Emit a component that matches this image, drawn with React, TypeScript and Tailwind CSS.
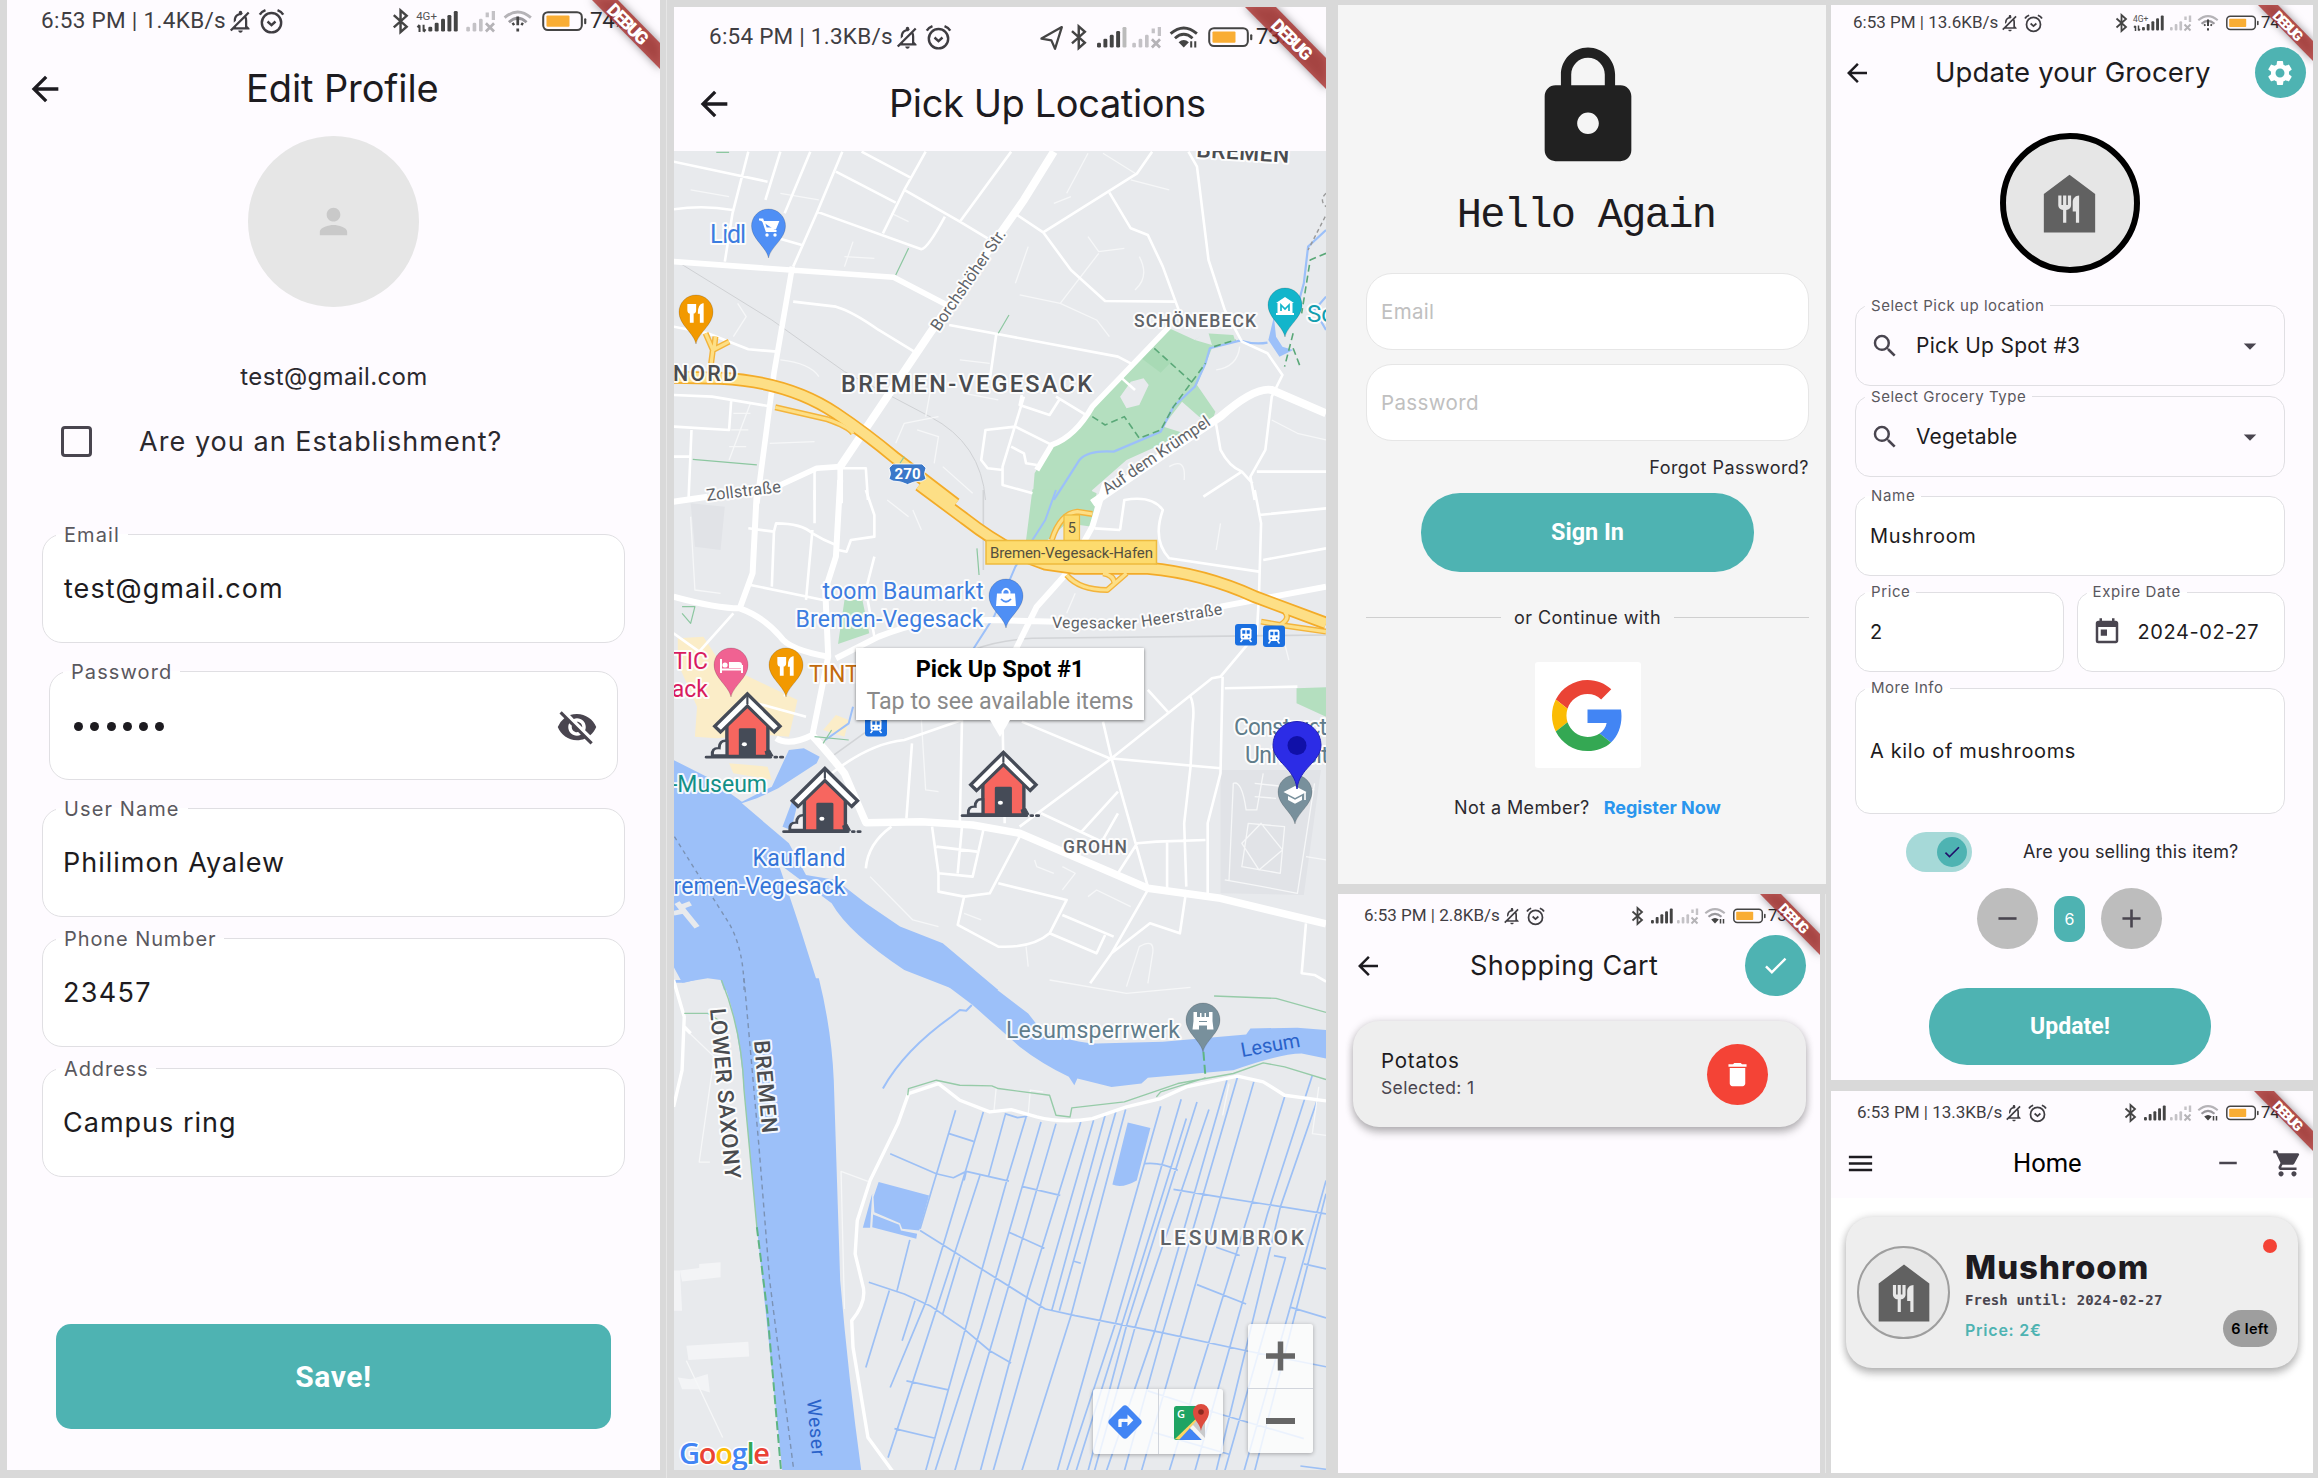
import React from "react";
import {
  MdArrowBack, MdVisibilityOff, MdPerson, MdLock, MdCheck, MdDelete, MdSettings, MdSearch,
  MdArrowDropDown, MdToday, MdRemove, MdAdd, MdMenu, MdShoppingCart, MdFoodBank,
  MdOutlineNotificationsOff, MdDirections,
} from "react-icons/md";

/* ---------- status bar ---------- */

type StatusProps = {
  big?: boolean;
  label: string;
  percent: string;
  network: "4g" | "weak" | "data";
  location?: boolean;
  warn?: boolean;
  className: string;
  textClass: string;
};

function RadioIcons({ k, network, location, warn }: { k: number; network: StatusProps["network"]; location?: boolean; warn?: boolean }) {
  const g4 = network === "4g";
  const bars = [0, 1, 2, 3, 4];
  const sx = g4 ? 46 : 48;
  const bx = g4 ? 20 : 29;
  return (
    <svg width={165 * k} height={24 * k} viewBox="0 0 165 24" fill="none" className="shrink-0">
      {location && <path d="M7 13 L22 4.5 L17 20.5 L14.3 14.3 Z" stroke="#444" strokeWidth="1.7" strokeLinejoin="round" />}
      <path d={`M${bx + 0.5} 7.5 L${bx + 10} 16 L${bx + 5.5} 20 V4 L${bx + 10} 8 L${bx + 0.5} 16.5`} stroke="#444" strokeWidth="1.8" />
      {g4 && (
        <>
          <text x="37" y="11" fontSize="8.5" fontFamily="Roboto" fill="#555">4G+</text>
          <path d="M39.5 15 V20 M38 16.5 L39.5 14.7 M42.5 14.5 V19.5 M44 18 L42.5 19.8" stroke="#444" strokeWidth="1.5" />
        </>
      )}
      {bars.map((i) => (
        <rect key={i} x={sx + i * 4.7} y={16 - i * 2.9} width="2.9" height={3.6 + i * 2.9} rx="1"
          fill={network === "weak" && i === 4 ? "#bbb" : "#444"} />
      ))}
      {[0, 1, 2].map((i) => (
        <rect key={i} x={74 + i * 4.7} y={16 - i * 2.9} width="2.7" height={3.6 + i * 2.9} rx="1" fill="#c4c2c6" />
      ))}
      <path d="M89.5 5.5 V9 M94 4.5 V11" stroke="#c4c2c6" strokeWidth="2.4" />
      <path d="M88.5 13.5 L94.5 19.5 M94.5 13.5 L88.5 19.5" stroke="#b5b3b7" strokeWidth="2" />
      <path d="M102.3 9.3 Q112 1 121.7 9.3" stroke={network === "weak" ? "#444" : "#b5b3b7"} strokeWidth="2.1" />
      <path d="M105.5 12.7 Q112 7 118.5 12.7" stroke={network === "weak" ? "#444" : "#9a989d"} strokeWidth="2.1" />
      {warn ? (
        <path d="M112 8.5 V15 M112 17.3 V19.6 M108 14.5 L109.5 13.5 M116 14.5 L114.5 13.5" stroke="#444" strokeWidth="2" />
      ) : (
        <>
          <path d="M108.2 15.6 Q112 12.6 115.8 15.6 L112 19.5 Z" fill="#444" />
          <path d="M117.5 15 V19.5 M120.5 15 V19.5" stroke="#444" strokeWidth="1.5" />
        </>
      )}
      <rect x="130.8" y="5.3" width="28.5" height="13.2" rx="3.5" stroke="#444" strokeWidth="1.5" />
      <rect x="133.2" y="7.7" width="17" height="8.4" rx="0.8" fill="#f9ad34" />
      <rect x="161" y="9.8" width="1.6" height="4.4" rx="0.8" fill="#444" />
    </svg>
  );
}

function AlarmIcon({ className }: { className: string }) {
  return (
    <svg viewBox="0 0 24 24" fill="none" stroke="currentColor" strokeWidth="2" className={className}>
      <circle cx="12" cy="13" r="8" />
      <path d="M8.7 12 L12 15 L15.3 12 M2.3 6.3 Q3.5 4 7 2.6 M21.7 6.3 Q20.5 4 17 2.6" />
    </svg>
  );
}

function StatusBar({ big, label, percent, network, location, warn, className, textClass }: StatusProps) {
  const k = big ? 1.355 : 1;
  return (
    <div className={`flex shrink-0 items-center font-[Roboto] text-[#3f3d42] ${big ? "text-[22.5px]" : "text-[17px]"} ${className}`}>
      <span className={`whitespace-nowrap ${textClass}`}>{label}</span>
      <MdOutlineNotificationsOff className={`shrink-0 -scale-x-100 ${big ? "ml-px size-[27px]" : "ml-[2px] size-[20px]"}`} />
      <AlarmIcon className={`shrink-0 ${big ? "ml-[3px] size-[29px]" : "ml-[3px] size-[21px]"}`} />
      <div className="ml-auto flex shrink-0 items-center">
        <RadioIcons k={k} network={network} location={location} warn={warn} />
        <div className={`flex items-baseline ${big ? "w-[70px]" : "w-[52px]"}`}>
          <span className="tracking-[-0.4px] text-[#2f2d31]">{percent}</span>
          <span className={big ? "text-[13px]" : "text-[10px]"}>%</span>
        </div>
      </div>
    </div>
  );
}

/* Corner banner: `near` and `far` are the distances from the corner where the band meets the edges. */
function DebugBanner({ near, far, font, length, at }: { near: number; far: number; font: number; length: number; at: number }) {
  const s = 100;
  return (
    <svg width={s} height={s} viewBox={`0 0 ${s} ${s}`} className="pointer-events-none absolute right-0 top-0 overflow-hidden">
      <g className="drop-shadow-[0_0_4px_rgba(0,0,0,0.55)]">
        <path d={`M${s - far} -1 H${s - near} L${s + 1} ${near + 1} V${far + 1} Z`} fill="#a92826" fillOpacity="0.75" />
      </g>
      <g transform={`translate(${s - at} ${(near + far) / 2 - at}) rotate(45)`}>
        <text x="0" y={font * 0.36} textAnchor="middle" textLength={length} fontFamily="Roboto" fontWeight="900" fontSize={font} fill="#fff">DEBUG</text>
      </g>
    </svg>
  );
}

/* ---------- outlined field ---------- */

function Field({ label, big, plain, className, labelClass, bodyClass, children }: {
  label: string; big?: boolean; plain?: boolean; className: string; labelClass: string; bodyClass?: string; children: React.ReactNode;
}) {
  return (
    <fieldset className={`min-w-0 shrink-0 border-[#e0dfe3] ${plain ? "" : "bg-white"} ${big ? "rounded-[20px] border-[1.5px]" : "rounded-[15px] border"} ${className}`}>
      <legend className={`whitespace-nowrap font-[Inter] text-[#5a585e] ${big ? "ml-[13px] h-[26px] px-2 text-[20px] leading-[28px]" : "ml-[9px] h-5 px-1.5 text-[15px] leading-[21px]"} ${labelClass}`}>{label}</legend>
      <div className={`flex items-center whitespace-nowrap font-[Inter] text-[#1d1b20] ${big ? "px-5 text-[27px]" : "px-[14px]"} ${bodyClass ?? (big ? "h-[85px]" : "h-[60px]")}`}>
        {children}
      </div>
    </fieldset>
  );
}

/* ---------- edit profile ---------- */

function EditProfile() {
  return (
    <section className="relative ml-[7px] flex h-[1470px] w-[653px] shrink-0 flex-col overflow-hidden bg-[#fefbff]">
      <StatusBar big label="6:53 PM | 1.4KB/s" percent="74" network="4g" warn className="h-[42px]" textClass="ml-[34px] tracking-[0.31px]" />
      <header className="flex h-[93px] shrink-0 items-center">
        <MdArrowBack className="ml-[18px] size-[40px] text-[#1d1b20]" />
        <h1 className="ml-[181px] whitespace-nowrap font-[Inter] text-[38px] tracking-[-0.1px] text-[#1d1b20]">Edit Profile</h1>
      </header>
      <div className="mt-px flex size-[171px] shrink-0 items-center justify-center self-center rounded-full bg-[#e6e6e6]">
        <MdPerson className="size-[41px] text-[#c9c9c9]" />
      </div>
      <div className="mt-[56px] flex h-7 shrink-0 items-center justify-center pl-px font-[Inter] text-[24px] tracking-[0.37px] text-[#2b292e]">test@gmail.com</div>
      <div className="mt-8 flex h-9 shrink-0 items-center">
        <span className="ml-[54px] h-[31px] w-[31px] rounded-[4px] border-[3px] border-[#49454f]" />
        <span className="ml-[47px] whitespace-nowrap pt-0.5 font-[Inter] text-[27px] tracking-[1.05px] text-[#2b292e]">Are you an Establishment?</span>
      </div>
      <div className="mt-[62px] flex flex-col px-[35px]">
        <Field big label="Email" className="h-[122px]" labelClass="tracking-[1.1px]"><span className="ml-px tracking-[1.05px]">test@gmail.com</span></Field>
        <Field big label="Password" className="mx-[7px] mt-[15px] h-[122px]" labelClass="tracking-[1.1px]">
          <div className="ml-[4px] flex gap-[7.3px]">
            {[0, 1, 2, 3, 4, 5].map((i) => <span key={i} className="size-[9px] rounded-full bg-[#1d1b20]" />)}
          </div>
          <MdVisibilityOff className="-mr-px ml-auto size-[42px] text-[#49454f]" />
        </Field>
        <Field big label="User Name" className="mt-[15px] h-[122px]" labelClass="tracking-[1.1px]"><span className="tracking-[1px]">Philimon Ayalew</span></Field>
        <Field big label="Phone Number" className="mt-2 h-[122px]" labelClass="tracking-[0.91px]"><span className="tracking-[1.3px]">23457</span></Field>
        <Field big label="Address" className="mt-2 h-[122px]" labelClass="tracking-[0.88px]"><span className="tracking-[1px]">Campus ring</span></Field>
      </div>
      <button className="mx-[49px] mt-[147px] h-[105px] shrink-0 rounded-[15px] bg-[#4eb3b2] font-[Roboto] text-[30px] font-bold tracking-[0.6px] text-white">Save!</button>
      <DebugBanner near={43} far={69} font={18} length={50} at={32} />
    </section>
  );
}

/* ---------- map ---------- */

const PIN = "M17 49 C15 38 0 30 0 17 A17 17 0 1 1 34 17 C34 30 19 38 17 49Z";

function Pin({ x, y, color, children }: { x: number; y: number; color: string; children?: React.ReactNode }) {
  return (
    <g transform={`translate(${x - 17} ${y})`}>
      <path d={PIN} fill={color} stroke="rgba(0,0,0,0.15)" strokeWidth="1" />
      {children}
    </g>
  );
}

const Cutlery = () => (
  <path d="M9 9 V15 Q9 18 11.5 18 V27 H14 V18 Q16.5 18 16.5 15 V9 M11.3 9 V15 M14 9 V15 M24 9 Q19.5 10 19.5 18 H21.5 V27 H24 Z" fill="#fff" stroke="#fff" strokeWidth="1.3" />
);

function Label({ x, y, len, size, color = "#4a4c50", weight = 400, anchor = "start", rotate = 0, halo = true, children }: {
  x: number; y: number; len?: number; size: number; color?: string; weight?: number;
  anchor?: "start" | "middle" | "end"; rotate?: number; halo?: boolean; children: string;
}) {
  return (
    <text x={x} y={y} textLength={len} fontSize={size} fontWeight={weight} fill={color} fontFamily="Roboto" textAnchor={anchor}
      transform={rotate ? `rotate(${rotate} ${x} ${y})` : undefined}
      stroke={halo ? "rgba(255,255,255,0.9)" : "none"} strokeWidth={halo ? 4 : 0} strokeLinejoin="round" paintOrder="stroke">
      {children}
    </text>
  );
}

function House({ x, y }: { x: number; y: number }) {
  const d = "#454b57";
  return (
    <g transform={`translate(${x} ${y}) scale(.4273 .3333)`}>
      <path d="M98 30 L146 100 V194 H50 V100 Z" fill="#f7665f" stroke={d} strokeWidth="8" />
      <path d="M98 0 L16 104 L35 128 L98 50 L161 128 L180 104 Z" fill={d} />
      <path d="M98 14 L27 104 L36 115 L98 37 L160 115 L169 104 Z" fill="#fff" />
      <path d="M98 12 V38" stroke={d} strokeWidth="5" />
      <rect x="78" y="110" width="40" height="86" rx="4" fill={d} />
      <circle cx="91" cy="158" r="6" fill="#fff" />
      <path d="M16 192 Q14 168 32 170 Q32 145 50 148 V192 Z" fill="#f1f1f3" stroke={d} strokeWidth="7" />
      <path d="M143 196 L140 180 L150 176 L158 194" fill={d} stroke={d} strokeWidth="3" />
      <path d="M2 197 H152 M163 197 H166 M176 197 H180" stroke={d} strokeWidth="8" strokeLinecap="round" />
    </g>
  );
}

function Train({ x, y }: { x: number; y: number }) {
  return (
    <g transform={`translate(${x} ${y})`}>
      <rect width="22" height="21.5" rx="3" fill="#1a6fe0" />
      <rect x="5.5" y="4" width="11" height="11.5" rx="2.2" fill="#fff" />
      <path d="M7.3 6.3 H10.3 V9.8 H7.3 Z M11.7 6.3 H14.7 V9.8 H11.7 Z" fill="#1a6fe0" />
      <circle cx="8.3" cy="12.8" r="1" fill="#1a6fe0" /><circle cx="13.7" cy="12.8" r="1" fill="#1a6fe0" />
      <path d="M7.5 15.5 L5.5 18 M14.5 15.5 L16.5 18" stroke="#fff" strokeWidth="1.5" />
    </g>
  );
}

const NORTH = "translate(665 0) scale(.4273 .3333)";
const MIDDLE = "translate(665 490) scale(.4273 .3333)";
const SOUTH = "translate(665 980) scale(.4273 .334)";

type Stroke = { t: string; d: string; w: number; c: string; dash?: string };

function Line({ t, d, w, c, dash }: Stroke) {
  return <path transform={t} d={d} fill="none" stroke={c} strokeWidth={w} strokeDasharray={dash} strokeLinejoin="round" vectorEffect="non-scaling-stroke" />;
}

const LANES_N = "M200 1210 L150 1380 M160 1240 H200 M155 1290 H195 M150 1340 H190 M245 1330 L350 1325 M440 725 L420 800 M420 770 L490 775 M940 580 L990 460 M910 610 L950 590 M1025 460 L1100 520 M925 910 L830 885 M925 910 L1010 960 L1040 1010 M1015 760 L925 910 M990 710 L1015 755 L1075 745 M1110 770 Q1135 830 1100 870 M620 1180 L610 1250 M540 1330 L560 1270 L640 1250 M590 1290 L640 1310 L630 1390 M650 1400 L720 1480 M700 1180 L780 1200 M690 1080 L760 1090 M1290 1110 Q1340 1100 1345 1040 M1180 1400 Q1220 1370 1215 1440 M1420 1260 L1480 1300 L1547 1320 M270 1080 Q340 1090 360 1130 M170 910 L190 950 L160 1010 M60 570 L150 590 M270 580 L360 600 M530 640 L570 665 M850 740 L820 850 M1090 540 L1180 570";
const ROADS_N = "M20 485 L240 545 M195 455 L158 640 L140 785 M270 455 L235 600 M340 455 L280 640 M415 455 L355 640 L300 800 M400 515 L540 608 M460 455 L578 535 M610 455 L560 570 L510 700 M355 635 L600 748 Q615 745 655 650 M560 570 L690 665 L755 715 M810 455 L690 665 M20 628 Q90 615 158 630 M265 715 L320 735 M1140 455 L1105 520 L885 697 M1040 578 L1090 685 L1130 705 L1165 800 L1195 905 L1030 903 L950 810 L885 697 L818 640 M1225 455 L1245 500 L1272 780 L1310 930 L1350 1025 L1410 1060 L1445 1125 L1420 1190 L1405 1350 L1370 1430 L1380 1500 M1195 905 L1205 940 M300 905 L400 920 Q440 935 500 990 L590 1060 M665 975 L1060 1070 L1090 1090 M775 1005 L760 1140 M20 980 L100 1000 L195 1048 L262 1055 M20 1185 L110 1190 L250 1220 M155 1200 L150 1290 L20 1280 M62 1290 L55 1500 M20 1370 H62 M915 1190 L985 1245 M835 1185 L830 1215 L900 1245 L925 1195 M840 1190 L790 1400 L790 1455 L860 1480 M820 1280 L750 1290 L740 1380 L755 1405 L790 1410 M820 1280 L905 1335 M810 1340 L840 1360 L845 1390 L870 1395 M1065 1130 L1100 1170 M1288 1260 L1300 1350 Q1320 1400 1350 1415 L1260 1490 M1350 1415 L1375 1450 M1385 1415 L1547 1415 M410 1405 L470 1405 L475 1500 M350 1410 L350 1500";
const ROADS_M = "M350 0 L350 100 M195 115 L255 125 L260 100 Q320 100 345 130 Q370 150 400 165 M255 125 L250 290 M345 120 L330 330 M200 285 L370 330 M470 0 L490 75 L490 140 L435 150 L425 185 L405 180 M490 200 L470 300 L490 440 M160 370 L80 485 M20 430 L80 485 M310 490 L280 620 M215 640 L330 680 M1065 120 L1005 115 M1065 120 L1075 30 Q1140 15 1165 60 Q1140 150 1180 205 L1390 245 M1390 75 L1547 55 M1380 0 L1395 100 L1390 320 L1385 430 L1300 560 L1280 565 L1040 810 L830 1010 M1400 210 L1547 175 M1310 595 L1480 590 M1130 600 L1180 670 M1230 620 Q1240 650 1235 700 L1230 830 L1215 1000 L1220 1190 M1025 695 L1045 805 L1130 1190 M835 695 L1040 805 L1300 835 M1305 560 L1300 850 L1270 1000 L1270 1210 M695 690 L690 1000 M578 760 L565 985 M390 850 Q480 760 560 750 L695 690 M790 700 L795 1000 M880 970 L1030 1060 M975 1025 L1060 905 M1060 1150 L1105 1060 L1150 1055 L1265 1050 M1175 1055 L1175 1195 M1020 1060 L1060 970 M470 1135 Q475 1060 530 1010 M625 1010 L640 1150 L720 1160 L745 1020 M635 1070 L730 1085 M695 1010 L685 1150 M640 1150 L640 1205 L700 1220 L760 1210 L830 1040 M700 1220 L685 1305 L780 1370 Q860 1375 900 1330 L940 1230 L780 1180 M930 1275 L1050 1340 M900 1330 L1010 1390 L1030 1335 M1130 1200 L1045 1390 L995 1480 M1045 1390 L1135 1300 L1205 1330 L1220 1200 M1500 1300 L1490 1450 L1520 1455 L1547 1475";
const LANES_M = "M60 80 L70 300 L130 310 M580 60 L600 120 M520 30 L570 80 M960 310 L940 370 M1300 100 L1290 180 M1450 460 L1460 510 M600 690 L610 900 L640 905 M865 1110 L870 1130 L910 1150 M990 1220 L1010 1200 L1090 1250 M1320 1170 L1330 880 Q1350 870 1360 960 L1385 960 L1400 850 M1310 1170 Q1400 1190 1480 1210 L1520 880 M1350 1130 L1365 1000 L1450 1010 L1440 1150 Z M1395 1000 L1350 1060 L1390 1140 L1445 1080 Z M1380 880 L1520 900 M1380 920 L1430 925 M1500 1100 L1547 1110 M1080 1490 L1110 1370 Q1150 1340 1140 1400 L1130 1480 M740 1290 L700 1270 M845 1370 L850 1430 M480 1160 L580 1290 L640 1310 M930 1130 L960 1150 L930 1200";
const DITCHES = "M680 390 L597 745 M573 778 L543 930 M745 395 L652 790 L610 965 L527 1220 M705 573 L700 600 M737 585 L522 1430 M797 400 L757 588 M845 410 L800 600 L610 1470 M880 425 L805 755 L740 1040 L632 1470 M915 430 L678 1470 M973 425 L850 935 L738 1470 M1003 420 L878 975 L768 1470 M1030 405 L905 990 M1055 395 L923 990 M1078 388 L950 1005 L835 1470 M1160 378 L1020 1010 L918 1470 M1208 357 L1055 1025 L940 1470 M1220 415 L962 1470 M1245 365 L1080 1035 L990 1470 M1273 388 L1100 1040 L1005 1470 M1315 300 L1145 1055 L1033 1470 M1340 290 L1165 1055 L1075 1470 M1378 305 L1115 1470 M1450 350 L1180 1470 M1515 285 L1410 700 L1240 1470 M1525 365 L1440 680 L1290 1470 M1547 600 L1355 1470 M1425 825 L1452 832 L1310 1470 M1547 640 L1380 1470 M525 930 L470 1160 M585 960 L555 1080 M690 830 L650 1000 M527 520 L635 580 L675 592 L705 573 L805 602 M665 460 L722 483 M835 618 L925 645 M805 755 L888 803 M597 750 L890 985 L960 1005 L1160 1055 L1360 1110 L1547 1158 M477 905 L560 940 L620 975 L700 1045 L760 1110 L810 1147 M565 1200 L663 1227 M537 1343 L632 1372 M1123 550 Q1160 545 1200 570 M1190 627 L1300 650 L1547 700 M1245 912 L1360 970 M1290 800 L1345 825 M1495 850 L1547 865 M1465 980 L1547 1012 M1130 1230 L1300 1300 L1495 1373 M1145 1355 L1320 1420 M1487 1455 L1547 1465 M957 842 L973 848 M795 400 L825 412 L848 408";
const HIGHWAY_N = "M20 1132 L130 1135 Q290 1145 400 1240 Q470 1300 540 1375 L680 1512";
const HIGHWAY_M = "M595 -15 L700 85 Q800 185 890 222 L960 235 L1130 235 Q1260 250 1380 320 L1547 400";
const RAMPS_N = "M258 1222 L380 1258 Q430 1280 440 1300 M106 1110 L112 1050 L95 1000 M112 1050 L150 1025 M118 1010 L115 1045";
const RAMPS_M = "M905 150 Q925 70 965 65 L1000 72 M940 255 Q970 300 1035 300 L1080 250 M1025 250 Q1050 255 1052 280 M1395 395 L1440 405 Q1465 385 1450 365 M1440 405 L1547 425";

function MapDrawing() {
  const water = "#9cc0f9";
  const park = "#b4dfbf";
  return (
    <svg width="652" height="1319" viewBox="674 151 652 1319" className="block">
      <rect x="674" y="151" width="652" height="1319" fill="#e8eaed" />
      <path transform={MIDDLE} d="M1300 840 L1535 840 L1495 1215 L1300 1210Z M60 40 L140 50 L130 180 L70 170Z" fill="#e1e3e7" />
      <path transform={MIDDLE} d="M30 445 L90 440 L130 520 L310 630 L290 740 L240 735 L120 745 L70 740 L75 650 L30 520Z M150 820 L240 830 L250 870 L160 850Z M370 720 L400 675 L430 690 L420 740Z" fill="#fbedc8" />

      <path transform={NORTH} d="M1180 985 L1240 1020 L1265 1000 L1330 1005 L1335 1025 L1280 1045 L1245 1155 L1288 1235 L1280 1265 L1250 1250 L1210 1205 L1165 1280 L1215 1300 L1150 1340 L1080 1380 L1000 1470 L985 1500 L860 1500 L865 1420 L905 1335 Q960 1310 990 1250 L1000 1220 L1100 1090 Z" fill={park} />
      <path transform={NORTH} d="M1065 1190 L1090 1145 L1120 1135 L1132 1155 L1110 1215 L1080 1225Z M1270 990 L1280 1035 L1240 1020Z" fill="#e8eaed" />
      <path transform={NORTH} d="M1115 1075 L1160 1118 L1185 1085 L1140 1045Z" fill="#a8dab5" />
      <path transform={MIDDLE} d="M860 -2 L990 -2 L1010 10 L1000 110 L940 100 L895 150 L845 150Z M420 330 L462 330 L478 430 L405 462Z M1478 595 L1547 592 L1547 680 L1478 640Z" fill={park} />

      <path transform={MIDDLE} d="M20 810 L100 862 L180 935 L250 890 L290 780 L325 775 L362 800 L355 820 L265 895 L215 925 L180 940 L290 1060 L330 1155 L400 1170 L470 1240 L550 1310 L650 1360 L780 1500 L680 1500 L560 1440 Q430 1330 390 1240 L265 1120 Q300 1250 320 1330 L362 1500 L138 1500 L130 1470 L100 1465 L40 1478 L20 1430Z M275 1010 L300 925 L312 932 L295 1020Z" fill={water} />
      <path transform={MIDDLE} d="M28 1238 L75 1312 M20 1270 L50 1262 M60 1240 L40 1250" stroke="#e8eaed" strokeWidth="14" />
      <path transform={SOUTH} d="M20 0 H70 L45 8 H20Z M132 -5 L360 -5 Q390 150 395 300 L410 900 Q430 1200 460 1475 L275 1475 L215 740 L185 330 Q170 100 132 -5Z" fill={water} />
      <path transform={SOUTH} d="M640 -2 L745 -2 L850 100 L880 150 Q960 190 1010 190 L1165 185 L1360 163 L1370 145 L1480 143 L1547 150 L1547 235 L1490 220 Q1440 220 1330 270 L1130 293 L1115 310 L1045 320 L965 295 L958 315 L945 290 Q880 250 830 200 L720 75Z" fill={water} />
      <path transform={SOUTH} d="M500 605 L618 645 L595 750 L555 745 L550 728 L490 695 L488 650Z M487 702 L548 733 L552 750 L590 760 L588 775 L485 740Z M485 640 L480 742 L463 742Z M1083 427 L1136 443 L1104 600 Q1070 625 1047 612Z" fill={water} />
      <Line t={SOUTH} d={DITCHES} w={1.7} c="#9dc0f5" />
      <Line t={SOUTH} d="M718 75 L705 92 L690 90 L670 110 Q560 210 510 325" w={2} c={water} />
      <Line t={NORTH} d="M1547 690 L1505 740 L1495 850 L1480 920 M1547 890 L1520 930 L1547 990 M1410 1028 Q1380 1035 1345 1022 L1275 1045 L1265 1090 L1240 1160 L1190 1220 L1160 1295 L1050 1355 Q990 1350 970 1380 L935 1450 L910 1500" w={2.2} c={water} />
      <path transform={NORTH} d="M1425 950 L1412 1020 L1438 1070 L1470 1050 L1445 1040 L1430 1010Z" fill={water} />
      <Line t={MIDDLE} d="M915 0 L890 90 L820 230 L770 380 L720 480 M440 650 L430 700 L375 750" w={2} c={water} />

      <path transform={SOUTH} d="M35 870 L80 862 L80 850 L130 845 L130 890 L40 903Z M50 1095 L195 1083 L197 1127 L55 1138Z M30 1190 L60 1195 L100 1180 L105 1235 L80 1225 L40 1225Z M20 870 L35 870 L40 990 L20 990Z" fill="#f3f4f6" />
      <Line t={NORTH} d="M20 778 L250 960 L420 1115 L620 1250 Q740 1330 750 1500" w={1} c="#cfd1d4" />
      <Line t={MIDDLE} d="M745 0 V240 M720 480 Q780 450 860 445 L1547 435 M390 800 L520 680" w={1.6} c="#d2d4d7" />
      <Line t={NORTH} d={LANES_N} w={1.3} c="#f6f7f8" />
      <Line t={MIDDLE} d={LANES_M} w={1.3} c="#f6f7f8" />
      <Line t={SOUTH} d="M475 603 L412 573 L420 985 M770 390 L775 325 M850 400 L855 330 L885 335 M1305 405 L1320 310 M1530 320 L1515 460 L1547 465 M900 0 L1080 40 L1230 22 M50 150 L115 230 L80 545 L105 545 M50 1140 L135 1370" w={1.3} c="#f6f7f8" />
      <Line t={NORTH} d={ROADS_N} w={2.6} c="#fff" />
      <Line t={MIDDLE} d={ROADS_M} w={2.6} c="#fff" />
      <Line t={SOUTH} d="M535 1475 L475 1370 L440 1100 L437 1020 Q475 960 462 910 L445 820 L450 720 L480 600 L545 430 L570 340 L640 310 L690 360 L760 395 L810 388 L870 410 Q930 430 1000 415 L1080 380 L1160 355 L1220 320 L1340 288 L1400 305 L1450 345 L1547 362 M20 0 L45 110 L40 270 L20 380 M45 140 L60 160" w={3.4} c="#fff" />
      <Line t={NORTH} d="M20 785 L535 832 L660 915 M298 800 L255 1120 L215 1510 M1180 980 L1000 1220 Q960 1310 905 1335 L870 1410 M270 1455 L355 1405 L410 1400 L410 1510" w={5.6} c="#fff" />
      <Line t={NORTH} d="M910 455 L840 600 L620 1000 L410 1400 M1000 1510 L1160 1370 L1300 1250 Q1380 1160 1420 1170 L1547 1240" w={8} c="#fff" />
      <Line t={MIDDLE} d="M20 35 L100 20 M215 0 L205 250 L175 355 M20 320 Q120 355 175 355 Q230 380 270 440 Q290 480 382 500 M410 -30 L400 200 L375 300 L382 500 L345 735 M400 505 L500 440 Q560 410 620 395 L760 390 L920 395 M1030 -20 L1000 110 L940 250 L870 350 L820 480 M1300 350 L1547 290 M345 735 Q290 770 260 745" w={6} c="#fff" />
      <Line t={MIDDLE} d="M340 730 Q370 770 420 850 L470 998 L600 995 L720 1005 L830 1030 L1130 1195 L1300 1225 L1547 1302" w={7.5} c="#fff" />

      <Line t={NORTH} d={RAMPS_N} w={6} c="#f3b43c" />
      <Line t={MIDDLE} d={RAMPS_M} w={6} c="#f3b43c" />
      <Line t={NORTH} d={HIGHWAY_N} w={13} c="#f3ab28" />
      <Line t={MIDDLE} d={HIGHWAY_M} w={13} c="#f3ab28" />
      <Line t={NORTH} d={RAMPS_N} w={3.2} c="#fddf86" />
      <Line t={MIDDLE} d={RAMPS_M} w={3.2} c="#fddf86" />
      <Line t={NORTH} d={HIGHWAY_N} w={9.5} c="#fddf86" />
      <Line t={MIDDLE} d={HIGHWAY_M} w={9.5} c="#fddf86" />

      <Line t={NORTH} d="M1145 1045 L1240 1155 M1000 1250 L1030 1275 L1075 1250 L1110 1315 L1160 1290 L1190 1220 L1265 1090 M1547 760 L1510 780 L1490 940 M1470 1000 L1450 1100 M1470 1045 L1488 1105 M1285 1040 L1335 1020" w={1.6} c="#5aa878" dash="7 4" />
      <Line t={NORTH} d="M570 745 L540 825 M805 945 L780 1000 M65 1378 L215 1395 M120 457 L150 457 M560 1370 L550 1390" w={1.2} c="#8cc7a0" />
      <Line t={NORTH} d="M1547 580 Q1530 600 1547 620 M1545 650 L1505 750" w={1.4} c="#999" dash="4 3" />
      <Line t={MIDDLE} d="M730 175 L735 255 M40 350 L70 350 L60 400 L40 370 M350 740 L430 750 M390 720 L370 760" w={1.2} c="#8cc7a0" />
      <Line t={MIDDLE} d="M22 1040 Q100 1200 150 1300 Q185 1380 185 1500" w={1.4} c="#7b92b5" dash="4 4" />
      <Line t={SOUTH} d="M185 -5 L220 500 L245 900 L302 1475" w={1.4} c="#7b92b5" dash="5 4" />
      <Line t={SOUTH} d="M132 0 Q180 150 185 330 L215 740 M45 100 H100 L150 140 M568 345 L570 325 L635 300 L690 315 L765 317 L780 325 L900 345 L915 405 L948 410 L952 383 L1075 365 L1200 310 L1330 280 L1400 248 L1450 260 L1547 298 M1150 350 L1160 335 L1265 293 M1285 48 L1430 55 L1547 97" w={1.4} c="#96cba8" />
      <Line t={SOUTH} d="M215 740 L240 1000 L272 1475 M1260 215 L1265 293" w={2} c="#5fb583" dash="9 4" />

      <Label x={1196} y={157} len={93} size={23} weight={500} rotate={3.6}>BREMEN</Label>
      <Label x={710} y={243} len={36} size={25} color="#3c7de0">Lidl</Label>
      <Label x={1134} y={327} len={122} size={17.5} weight={500} color="#5f6368">SCHÖNEBECK</Label>
      <Label x={673} y={381} len={64} size={21.5} weight={500}>NORD</Label>
      <Label x={841} y={392} len={251} size={23.5} weight={500}>BREMEN-VEGESACK</Label>
      <Label x={939} y={332} len={119} size={16.5} rotate={-55.5} color="#5f6368">Borchshöher Str.</Label>
      <Label x={1107} y={495} len={126} size={16.5} rotate={-34} color="#5f6368">Auf dem Krümpel</Label>
      <Label x={707} y={501} len={75} size={16.5} rotate={-7} color="#5f6368">Zollstraße</Label>
      <Label x={1307} y={322} size={24} color="#129eaf">Sc</Label>

      <path d="M893 464 H922 L926 468 Q923 474 926 479 L922 481 Q914 481 907.5 484.5 Q901 481 893 481 L889 479 Q892 474 889 468 Z" fill="#3b78c9" stroke="#fff" strokeWidth="0.8" />
      <Label x={907.5} y={479} len={26} size={15} weight={700} color="#fff" anchor="middle" halo={false}>270</Label>
      <rect x="1064" y="515" width="15.5" height="26" fill="#fddb6e" stroke="#eebb3e" strokeWidth="1.2" />
      <Label x={1071.8} y={533} size={14.5} color="#54503f" anchor="middle" halo={false}>5</Label>
      <rect x="986" y="540.5" width="170.5" height="23.5" fill="#fddb6e" stroke="#eebb3e" strokeWidth="1.5" />
      <Label x={990} y={557.5} len={163} size={15} color="#54503f" halo={false}>Bremen-Vegesack-Hafen</Label>

      <Label x={983.5} y={599} len={161} size={23} color="#3c7de0" anchor="end">toom Baumarkt</Label>
      <Label x={983.5} y={627} len={188} size={23} color="#3c7de0" anchor="end">Bremen-Vegesack</Label>
      <Label x={1052} y={628} len={85} size={16} rotate={0.5} color="#5f6368">Vegesacker</Label>
      <Label x={1142} y={627} len={82} size={16} rotate={-9} color="#5f6368">Heerstraße</Label>
      <Label x={708} y={669} size={23} color="#d81b60" anchor="end">TIC</Label>
      <Label x={708} y={696.5} size={23} color="#d81b60" anchor="end">ack</Label>
      <Label x={809} y={682} size={23} color="#c26a0d">TINT</Label>
      <Label x={767} y={792} size={23} color="#129087" anchor="end">-Museum</Label>
      <Label x={845.5} y={865.5} len={93} size={23} color="#3374d8" anchor="end">Kaufland</Label>
      <Label x={845.5} y={893.5} len={172} size={23} color="#3374d8" anchor="end">remen-Vegesack</Label>
      <Label x={1063} y={852.5} len={64} size={17.5} weight={500} color="#5f6368">GROHN</Label>
      <Label x={1234} y={735} len={112} size={23} color="#607d8b">Constructor</Label>
      <Label x={1245} y={763} len={94} size={23} color="#607d8b">University</Label>
      <Label x={1006} y={1037.5} len={174} size={23} color="#607d8b">Lesumsperrwerk</Label>
      <Label x={1242} y={1057} len={60} size={20} rotate={-10} color="#2a62c9" halo={false}>Lesum</Label>
      <Label x={1160} y={1244.5} len={144} size={21} weight={500} color="#5f6368">LESUMBROK</Label>
      <Label x={710} y={1009} len={171} size={22} weight={500} rotate={84.8}>LOWER SAXONY</Label>
      <Label x={754} y={1041} len={93} size={22} weight={500} rotate={84.8}>BREMEN</Label>
      <Label x={807} y={1400} len={57} size={19.5} rotate={84.8} color="#2a62c9" halo={false}>Weser</Label>

      <Pin x={768.5} y={209} color="#4f8ff5"><path d="M7.5 10.5 H11 L15 22 H25 M12.5 13 H26.5 L23.8 19.5 H14.5 Z" fill="#fff" stroke="#fff" strokeWidth="1.8" /><circle cx="15.5" cy="26" r="1.7" fill="#fff" /><circle cx="23.5" cy="26" r="1.7" fill="#fff" /></Pin>
      <Pin x={696} y={295} color="#f29900"><Cutlery /></Pin>
      <Pin x={1285} y={288} color="#12b5cb">
        <path d="M8 15 L17 9 L26 15 Z M8 25 H26 V27 H8 Z M9.5 15 H24.5 V25 H9.5 Z" fill="#fff" />
        <path d="M13 23 V17 L17 21 L21 17 V23" fill="none" stroke="#12b5cb" strokeWidth="1.7" />
      </Pin>
      <Pin x={1006} y={579} color="#4f8ff5">
        <path d="M8 14.5 H26 L27 27 H7 Z" fill="#fff" /><path d="M13.5 15 V12.5 Q17 7 20.5 12.5 V15" fill="none" stroke="#fff" strokeWidth="1.8" />
        <path d="M12 20 Q17 25.5 22 20" fill="none" stroke="#4f8ff5" strokeWidth="1.8" />
      </Pin>
      <Pin x={731} y={648} color="#f06292">
        <path d="M7 11 V25 M7 21.5 H28 M28 25 V17" fill="none" stroke="#fff" strokeWidth="2" /><path d="M15 14 H25 Q28 14 28 17 V20 H15 Z" fill="#fff" /><circle cx="11" cy="17" r="2.6" fill="#fff" />
      </Pin>
      <Pin x={786} y={648} color="#f29900"><Cutlery /></Pin>
      <Pin x={1295} y={775} color="#78909c">
        <path d="M5.5 17 L17 11 L28.5 17 L17 23 Z M10 21 L17 24.8 L24 21 V25 L17 28.8 L10 25 Z" fill="#fff" /><path d="M27 17 V25" stroke="#fff" strokeWidth="1.6" />
      </Pin>
      <Pin x={1203} y={1003} color="#78909c">
        <path d="M7.5 9 H11 V14 H14 V10 H15.5 V14 H18.5 V10 H20 V14 H23 V9 H26.5 V18 L27.5 26.5 H21 V22.5 H13 V26.5 H6.5 L7.5 18 Z" fill="#fff" />
        <path d="M13 18.5 H21" stroke="#78909c" strokeWidth="1" />
      </Pin>
      <Train x={1235} y={624} />
      <Train x={1263} y={625.5} />
      <Train x={865} y={715} />
      <House x={705.5} y={691.5} />
      <House x={783} y={766} />
      <House x={961.5} y={750} />
      <path d="M1297 789 C1295 768 1273 762 1273 745 A24 23.5 0 1 1 1321 745 C1321 762 1299 768 1297 789Z" fill="#2c2ce6" stroke="#2020b8" strokeWidth="1" />
      <circle cx="1297" cy="745.5" r="9.5" fill="#1010a8" />

      <text x="679" y="1463.5" textLength="91" fontFamily="Open Sans" fontSize="29" fontWeight="600" stroke="#fff" strokeWidth="3" strokeLinejoin="round" paintOrder="stroke">
        <tspan fill="#4285f4">G</tspan><tspan fill="#ea4335">o</tspan><tspan fill="#fbbc04">o</tspan><tspan fill="#4285f4">g</tspan><tspan fill="#34a853">l</tspan><tspan fill="#ea4335">e</tspan>
      </text>
    </svg>
  );
}

function PickUpLocations() {
  return (
    <section className="relative ml-[7px] mt-[7px] flex h-[1463px] w-[652px] shrink-0 flex-col overflow-hidden bg-[#fefbff]">
      <StatusBar big label="6:54 PM | 1.3KB/s" percent="73" network="weak" location className="h-[60px]" textClass="ml-[35px] tracking-[0.24px]" />
      <header className="mb-[11px] flex h-[73px] shrink-0 items-center">
        <MdArrowBack className="ml-[20px] size-[40px] text-[#1d1b20]" />
        <h1 className="ml-[155px] whitespace-nowrap font-[Inter] text-[38px] tracking-[-0.4px] text-[#1d1b20]">Pick Up Locations</h1>
      </header>
      <div className="relative h-[1319px] shrink-0 overflow-hidden">
        <MapDrawing />
        <div className="absolute left-[182px] top-[497px] flex h-[72px] w-[288px] flex-col items-center justify-center gap-[6px] whitespace-nowrap bg-white pt-px font-[Roboto] leading-[26px] shadow-[0_1px_3px_rgba(0,0,0,0.5)]">
          <span className="text-[23.5px] font-bold text-black">Pick Up Spot #1</span>
          <span className="text-[23.2px] text-[#8a8a8a]">Tap to see available items</span>
          <svg width="20" height="17" viewBox="0 0 20 17" className="absolute left-[134px] top-full"><path d="M0 0 H20 L10 17Z" fill="#fff" /></svg>
        </div>
        <div className="absolute left-[574px] top-[1173px] flex h-[129px] w-[65px] flex-col divide-y divide-gray-300 rounded-[3px] bg-white/80 text-[#666] shadow-[0_1px_4px_rgba(0,0,0,0.3)]">
          <svg viewBox="0 0 65 64" className="flex-1"><path d="M18 32 H47 M32.5 17.5 V46.5" stroke="currentColor" strokeWidth="5.5" /></svg>
          <svg viewBox="0 0 65 64" className="flex-1"><path d="M18 32 H47" stroke="currentColor" strokeWidth="6" /></svg>
        </div>
        <div className="absolute left-[419px] top-[1238px] flex h-[65px] w-[130px] divide-x divide-gray-300 rounded-[3px] bg-white/80 shadow-[0_1px_4px_rgba(0,0,0,0.3)]">
          <div className="flex flex-1 items-center justify-center"><MdDirections className="size-[40px] text-[#4285f4]" /></div>
          <div className="flex flex-1 items-center justify-center">
            <svg width="40" height="40" viewBox="0 0 40 40">
              <rect x="3" y="4" width="31" height="34" rx="2.5" fill="#1fa463" />
              <path d="M34 14 L14 38 H32 Q34 38 34 36Z" fill="#d8d8d8" />
              <path d="M34 8 L4 37 L10 38 L34 15Z" fill="#fdd663" />
              <path d="M19 26 L31 38 H8Z" fill="#4285f4" />
              <path d="M19 26 L34 38 V20 L26 18Z" fill="#c9cacc" />
              <path d="M19 26 L31 38 H34 V36 L22 23Z" fill="#f5f5f5" />
              <text x="6" y="16" fontSize="11" fontFamily="Open Sans" fontWeight="600" fill="#fff">G</text>
              <path d="M30 29 C29 21 22 18 22 10 A8 8 0 1 1 38 10 C38 18 31 21 30 29Z" fill="#dd4b3e" />
              <circle cx="30" cy="10" r="2.8" fill="#8c2a20" />
            </svg>
          </div>
        </div>
      </div>
      <DebugBanner near={51} far={82} font={18} length={50} at={34} />
    </section>
  );
}

/* ---------- sign in ---------- */

function GoogleLogo() {
  return (
    <svg width="71" height="71" viewBox="0 0 48 48">
      <path fill="#ea4335" d="M24 9.5c3.54 0 6.71 1.22 9.21 3.6l6.85-6.85C35.9 2.38 30.47 0 24 0 14.62 0 6.51 5.38 2.56 13.22l7.98 6.19C12.43 13.72 17.74 9.5 24 9.5z" />
      <path fill="#4285f4" d="M46.98 24.55c0-1.57-.15-3.09-.38-4.55H24v9.02h12.94c-.58 2.96-2.26 5.48-4.78 7.18l7.73 6c4.51-4.18 7.09-10.36 7.09-17.65z" />
      <path fill="#fbbc05" d="M10.53 28.59c-.48-1.45-.76-2.99-.76-4.59s.27-3.14.76-4.59l-7.98-6.19C.92 16.46 0 20.12 0 24c0 3.88.92 7.54 2.56 10.78l7.97-6.19z" />
      <path fill="#34a853" d="M24 48c6.48 0 11.93-2.13 15.89-5.81l-7.73-6c-2.15 1.45-4.92 2.3-8.16 2.3-6.26 0-11.57-4.22-13.47-9.91l-7.98 6.19C6.51 42.62 14.62 48 24 48z" />
    </svg>
  );
}

function SignIn() {
  return (
    <section className="mt-[5px] flex h-[879px] w-[488px] shrink-0 flex-col bg-[#f5f5f5] pl-7 pr-[17px] font-[Inter] text-[18px] text-[#2b292e]">
      <MdLock className="mt-[36.5px] size-[130px] shrink-0 self-center text-[#212121]" />
      <h1 className="mt-[20.5px] flex h-[44px] shrink-0 items-center justify-center whitespace-nowrap pr-[3px] pt-[5px] font-['Liberation_Mono'] text-[42px] tracking-[-1.7px] text-[#1d1b20]">Hello Again</h1>
      <div className="mt-[37px] flex h-[77px] shrink-0 items-center rounded-[26px] border border-[#e6e6e6] bg-white pl-[14px] pt-px text-[20.5px] tracking-[0.31px] text-[#c0c0c0]">Email</div>
      <div className="mt-[14px] flex h-[77px] shrink-0 items-center rounded-[26px] border border-[#e6e6e6] bg-white pl-[14px] pt-px text-[20.5px] tracking-[0.38px] text-[#c0c0c0]">Password</div>
      <div className="mt-[13px] flex h-[26px] shrink-0 items-center justify-end tracking-[0.45px]">Forgot Password?</div>
      <button className="mx-[55px] mt-[13px] h-[79px] shrink-0 rounded-[39px] bg-[#4eb3b2] font-[Roboto] text-[23.4px] font-bold text-white">Sign In</button>
      <div className="mt-[33px] flex h-6 shrink-0 items-center gap-[13px] whitespace-nowrap tracking-[0.45px]">
        <span className="h-px flex-1 bg-[#cfcfcf]" />or Continue with<span className="h-px flex-1 bg-[#cfcfcf]" />
      </div>
      <div className="mt-[33px] flex size-[106px] shrink-0 items-center justify-center self-center rounded-[3px] bg-white">
        <GoogleLogo />
      </div>
      <div className="mt-[27px] flex h-6 shrink-0 items-center justify-center gap-[14px] whitespace-nowrap">
        <span className="tracking-[0.39px]">Not a Member?</span>
        <span className="font-bold text-[#2a96ee]">Register Now</span>
      </div>
    </section>
  );
}

/* ---------- cart ---------- */

function ShoppingCart() {
  return (
    <section className="relative flex h-[579px] w-[482px] shrink-0 flex-col overflow-hidden bg-[#fefbff]">
      <StatusBar label="6:53 PM | 2.8KB/s" percent="73" network="data" className="h-[44px]" textClass="ml-[26px]" />
      <header className="flex h-[56px] shrink-0 items-center">
        <MdArrowBack className="ml-[15px] size-[30px] text-[#1d1b20]" />
        <h1 className="ml-[87px] whitespace-nowrap font-[Inter] text-[27px] tracking-[0.36px] text-[#1d1b20]">Shopping Cart</h1>
      </header>
      <div className="ml-[15px] mr-[14px] mt-[27px] flex h-[106px] shrink-0 items-center rounded-[26px] bg-[#eeeeee] pl-[28px] pr-[38px] shadow-[0_6px_9px_rgba(0,0,0,0.2),0_1px_8px_rgba(0,0,0,0.2)]">
        <div className="flex flex-col whitespace-nowrap font-[Inter]">
          <span className="text-[20.5px] leading-[28px] tracking-[0.77px] text-[#1d1b20]">Potatos</span>
          <span className="text-[17.5px] leading-[26px] tracking-[0.37px] text-[#49454f]">Selected: 1</span>
        </div>
        <span className="ml-auto flex size-[61px] items-center justify-center rounded-full bg-[#f44336]"><MdDelete className="size-[31px] text-white" /></span>
      </div>
      <DebugBanner near={40} far={61} font={14} length={36} at={26} />
      <span className="absolute right-[14.5px] top-[41px] flex size-[61px] items-center justify-center rounded-full bg-[#4eb3b2]"><MdCheck className="size-[29px] text-white" /></span>
    </section>
  );
}

/* ---------- update grocery ---------- */

function UpdateGrocery() {
  return (
    <section className="relative mt-[5px] flex h-[1075px] w-[482px] shrink-0 flex-col overflow-hidden bg-[#fefbff]">
      <StatusBar label="6:53 PM | 13.6KB/s" percent="74" network="4g" warn className="h-[36px]" textClass="ml-[22px]" />
      <header className="flex h-[63px] shrink-0 items-center">
        <MdArrowBack className="ml-[11px] size-[30px] text-[#1d1b20]" />
        <h1 className="ml-[63px] whitespace-nowrap font-[Inter] text-[27.5px] tracking-[0.15px] text-[#1d1b20]">Update your Grocery</h1>
      </header>
      <div className="mr-[5px] mt-[29px] flex size-[140px] shrink-0 items-center justify-center self-center rounded-full border-[6.5px] border-black bg-[#e6e6e6]">
        <MdFoodBank className="size-[77px] text-[#616161]" />
      </div>
      <div className="mt-[22px] flex flex-col pl-6 pr-[28px]">
        <Field plain label="Select Pick up location" className="h-[91px]" bodyClass="h-[62px]" labelClass="tracking-[0.53px]">
          <MdSearch className="size-[30px] text-[#49454f]" />
          <span className="ml-[16px] text-[21px] tracking-[0.26px]">Pick Up Spot #3</span>
          <MdArrowDropDown className="ml-auto mr-[5px] size-[30px] text-[#49454f]" />
        </Field>
        <Field plain label="Select Grocery Type" className="h-[91px]" bodyClass="h-[62px]" labelClass="tracking-[0.54px]">
          <MdSearch className="size-[30px] text-[#49454f]" />
          <span className="ml-[16px] text-[21px] tracking-[0.19px]">Vegetable</span>
          <MdArrowDropDown className="ml-auto mr-[5px] size-[30px] text-[#49454f]" />
        </Field>
        <Field label="Name" className="mt-[9px] h-[90px]" labelClass="leading-5! tracking-[0.7px]"><span className="text-[20px] tracking-[0.7px]">Mushroom</span></Field>
        <div className="mt-[6px] flex gap-[13px]">
          <Field label="Price" className="h-[90px] flex-1" labelClass="leading-5! tracking-[0.6px]"><span className="text-[20px]">2</span></Field>
          <Field label="Expire Date" className="h-[90px] flex-1" labelClass="leading-5! tracking-[0.66px]">
            <MdToday className="size-[30px] text-[#49454f]" />
            <span className="ml-[16px] text-[20px] tracking-[0.6px]">2024-02-27</span>
          </Field>
        </div>
        <Field label="More Info" className="mt-[6px] h-[136px]" bodyClass="h-[106px]" labelClass="leading-5! tracking-[0.51px]"><span className="text-[20px] tracking-[0.65px]">A kilo of mushrooms</span></Field>
      </div>
      <div className="mt-[17px] flex h-[41px] shrink-0 items-center">
        <span className="ml-[75px] flex h-[40px] w-[66px] items-center justify-end rounded-full bg-[#a6d9d8] pr-[5px]">
          <span className="flex h-[30px] w-[30px] items-center justify-center rounded-full bg-[#4eb3b2]"><MdCheck className="size-[20px] text-[#21106a]" /></span>
        </span>
        <span className="ml-[51px] whitespace-nowrap font-[Inter] text-[18px] tracking-[0.15px] text-[#2b292e]">Are you selling this item?</span>
      </div>
      <div className="mr-[5px] mt-4 flex h-[61px] shrink-0 items-center justify-center gap-4">
        <span className="flex size-[61px] items-center justify-center rounded-full bg-[#bdbdbd]"><MdRemove className="size-[31px] text-[#49454f]" /></span>
        <span className="flex h-[46px] w-[31px] items-center justify-center rounded-[14px] bg-[#4eb3b2] font-[Inter] text-[16px] text-white">6</span>
        <span className="flex size-[61px] items-center justify-center rounded-full bg-[#bdbdbd]"><MdAdd className="size-[31px] text-[#49454f]" /></span>
      </div>
      <button className="ml-[98px] mr-[102px] mt-[39px] h-[77px] shrink-0 rounded-[38px] bg-[#4eb3b2] pt-0.5 font-[Roboto] text-[23px] font-bold text-white">Update!</button>
      <DebugBanner near={36} far={56} font={14} length={36} at={25} />
      <span className="absolute right-[7.5px] top-[42px] flex size-[51px] items-center justify-center rounded-full bg-[#4eb3b2]"><MdSettings className="size-[30px] text-white" /></span>
    </section>
  );
}

/* ---------- home ---------- */

function Home() {
  return (
    <section className="relative mt-[11px] flex h-[382px] w-[482px] shrink-0 flex-col overflow-hidden bg-white">
      <div className="h-[107px] shrink-0 bg-[#fefbff]">
        <StatusBar label="6:53 PM | 13.3KB/s" percent="74" network="data" className="h-[44px]" textClass="ml-[26px]" />
        <header className="flex h-[56px] items-center">
          <MdMenu className="ml-[14px] size-[31px] text-[#1d1b20]" />
          <h1 className="ml-[137px] font-[Roboto] text-[25.5px] text-black">Home</h1>
          <MdRemove className="ml-auto size-[30px] text-[#49454f]" />
          <MdShoppingCart className="ml-[29px] mr-[10px] size-[31px] text-[#49454f]" />
        </header>
      </div>
      <div className="mx-[15px] mt-[19px] flex h-[151px] shrink-0 items-center rounded-[26px] bg-[#eeeeee] pl-[11px] shadow-[0_6px_9px_rgba(0,0,0,0.2),0_1px_8px_rgba(0,0,0,0.2)]">
        <div className="flex size-[93px] shrink-0 items-center justify-center rounded-full border-2 border-[#9e9e9e] bg-[#e8e8e8]">
          <MdFoodBank className="size-[76px] text-[#616161]" />
        </div>
        <div className="ml-[15px] flex h-full flex-col whitespace-nowrap pt-[30px] font-[Inter]">
          <span className="text-[33px] font-extrabold leading-10 tracking-[1px] text-[#1d1b20]">Mushroom</span>
          <span className="font-['DejaVu_Sans_Mono'] text-[14px] font-bold leading-[27px] tracking-[0.16px] text-[#49454f]">Fresh until: 2024-02-27</span>
          <span className="text-[16px] font-semibold leading-8 tracking-[0.76px] text-[#4eb3b2]">Price: 2€</span>
        </div>
        <div className="ml-auto mr-[21px] flex h-full flex-col items-end justify-between pb-[21px] pt-[22px]">
          <span className="size-[14px] rounded-full bg-[#f44336]" />
          <span className="flex h-[37px] w-[54px] items-center justify-center whitespace-nowrap rounded-full bg-[#9e9e9e] pt-px font-[Inter] text-[14.5px] font-semibold tracking-[0.3px] text-black">6 left</span>
        </div>
      </div>
      <DebugBanner near={40} far={60} font={14} length={36} at={25} />
    </section>
  );
}

export default function App() {
  return (
    <div className="flex h-[1478px] w-[2318px] overflow-hidden bg-[#d9d9d9]">
      <EditProfile />
      <div className="ml-[6px] w-px bg-[#e6e6e6]" />
      <PickUpLocations />
      <div className="ml-3 flex w-[488px] shrink-0 flex-col">
        <SignIn />
        <div className="mt-[10px] flex justify-between">
          <ShoppingCart />
          <div className="w-px bg-[#e8e8e8]" />
        </div>
      </div>
      <div className="ml-[5px] flex w-[482px] shrink-0 flex-col">
        <UpdateGrocery />
        <Home />
      </div>
    </div>
  );
}
